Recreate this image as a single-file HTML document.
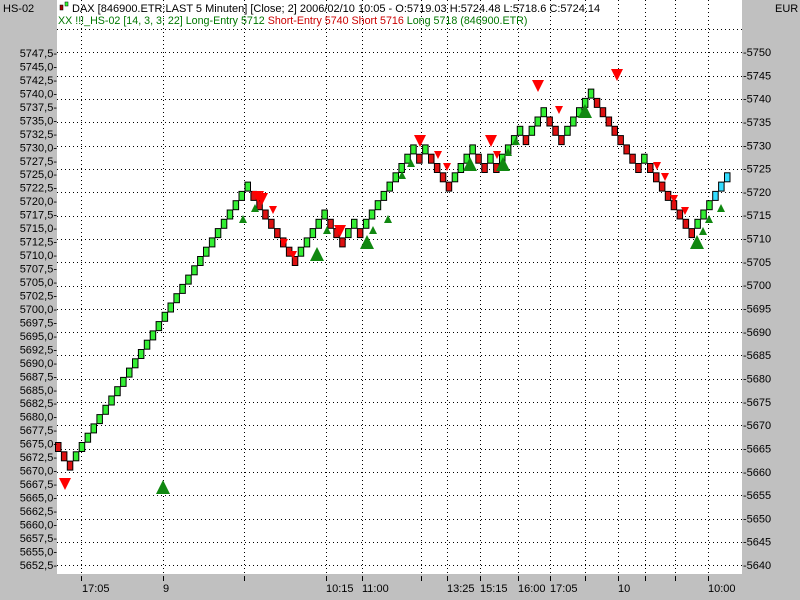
<!DOCTYPE html>
<html><head><meta charset="utf-8"><style>
html,body{margin:0;padding:0;background:#c0c0c0;}
body{width:800px;height:600px;overflow:hidden;position:relative;font-family:"Liberation Sans",Arial,sans-serif;font-size:11px;}
svg{position:absolute;left:0;top:0;}
</style></head><body>
<svg id="s" width="800" height="600" xmlns="http://www.w3.org/2000/svg" font-family="Liberation Sans, Arial, sans-serif" font-size="11">
<rect x="0" y="0" width="800" height="600" fill="#c0c0c0"/>
<rect x="57" y="0" width="685" height="574" fill="#ffffff"/>
<g id="grid" stroke="#000" stroke-width="1" stroke-dasharray="1,3"></g>
<g id="bricks"></g>
<g id="tri"></g>
<g id="labels" fill="#000"></g>
<text x="3" y="12" fill="#000">HS-02</text>
<text x="775" y="12" fill="#000">EUR</text>
<rect x="60" y="5" width="3" height="5" fill="#a00" stroke="#000" stroke-width="0.5"/>
<rect x="65" y="2" width="3" height="4" fill="#3f3" stroke="#000" stroke-width="0.5"/>
<text x="72" y="12" fill="#000">DAX [846900.ETR:LAST 5 Minuten] [Close; 2] 2006/02/10 10:05 - O:5719.03 H:5724.48 L:5718.6 C:5724.14</text>
<text x="58" y="24" font-size="10.7"><tspan fill="#007700">XX !!!_HS-02 [14, 3, 3; 22] Long-Entry 5712</tspan><tspan fill="#cc0000"> Short-Entry 5740 Short 5716</tspan><tspan fill="#007700"> Long 5718 (846900.ETR)</tspan></text>
</svg>
<script>
var NS="http://www.w3.org/2000/svg";
function el(p,t,a,txt){var e=document.createElementNS(NS,t);for(var k in a)e.setAttribute(k,a[k]);if(txt!=null)e.textContent=txt;document.getElementById(p).appendChild(e);return e;}
var vx=[81,163,244,326,362,421,447,480,518,550,585,618,645,675,708];
vx.forEach(function(x){el("grid","line",{x1:x+.5,y1:0,x2:x+.5,y2:574});el("labels","line",{x1:x+.5,y1:576,x2:x+.5,y2:581,stroke:"#000"});});
for(var k=0;k<24;k++){var y=Math.round(29+k*23.32)+.5;el("grid","line",{x1:57,y1:y,x2:742,y2:y});}
for(var k=0;k<39;k++){var v=(5747.5-k*2.5).toFixed(1).replace(".",",");var y=53+k*13.47;el("labels","text",{x:57,y:y+4,"text-anchor":"end"},v+"-");}
for(var k=0;k<23;k++){var v=5750-k*5;var y=52+k*23.32;el("labels","text",{x:743,y:y+4},"-"+v);}
[[82,"17:05"],[163,"9"],[326,"10:15"],[362,"11:00"],[447,"13:25"],[480,"15:15"],[518,"16:00"],[550,"17:05"],[618,"10"],[708,"10:00"]].forEach(function(a){el("labels","text",{x:a[0],y:592},a[1]);});
var seq=[];function run(a,b,c){var s=a<=b?1:-1;for(var l=a;l!=b+s;l+=s)seq.push([l,c]);}
run(0,-2,"R");run(-1,28,"G");run(27,20,"R");run(21,25,"G");run(24,22,"R");run(23,24,"G");run(23,23,"R");
run(24,32,"G");run(31,31,"R");run(32,32,"G");run(31,28,"R");run(29,32,"G");run(31,30,"R");run(31,31,"G");run(30,30,"R");
run(31,34,"G");run(33,33,"R");run(34,36,"G");run(35,33,"R");run(34,38,"G");run(37,30,"R");run(31,31,"G");run(30,23,"R");
run(24,26,"G");run(27,29,"C");
var col={R:"#dd1111",G:"#33ee33",C:"#33ddff"};
var pitch=(727-58)/(seq.length-1);
seq.forEach(function(b,i){var x=58+i*pitch,y=447-b[0]*9.3;el("bricks","rect",{x:(x-2.5).toFixed(1),y:(y-4.5).toFixed(1),width:5.5,height:9,fill:col[b[1]],stroke:"#000","stroke-width":1});});
function down(x,y,s){el("tri","polygon",{points:(x-s)+","+(y-s)+" "+(x+s)+","+(y-s)+" "+x+","+(y+s),fill:"#ff0000"});}
function up(x,y,s){el("tri","polygon",{points:(x-s)+","+(y+s)+" "+(x+s)+","+(y+s)+" "+x+","+(y-s),fill:"#118811"});}
[[65,484],[258,197],[262,199],[340,231],[420,141],[491,141],[538,86],[617,75]].forEach(function(p){down(p[0],p[1],6);});
[[273,210],[438,155],[447,167],[497,155],[559,110],[657,166],[665,177],[674,199],[685,211],[293,255],[284,243]].forEach(function(p){down(p[0],p[1],4);});
[[163,487],[317,254],[367,242],[470,164],[503,164],[585,111],[697,242]].forEach(function(p){up(p[0],p[1],7);});
[[243,219],[255,208],[327,230],[373,230],[388,219],[402,175],[411,163],[508,152],[516,141],[709,219],[703,231],[721,208]].forEach(function(p){up(p[0],p[1],4);});
</script>
</body></html>
